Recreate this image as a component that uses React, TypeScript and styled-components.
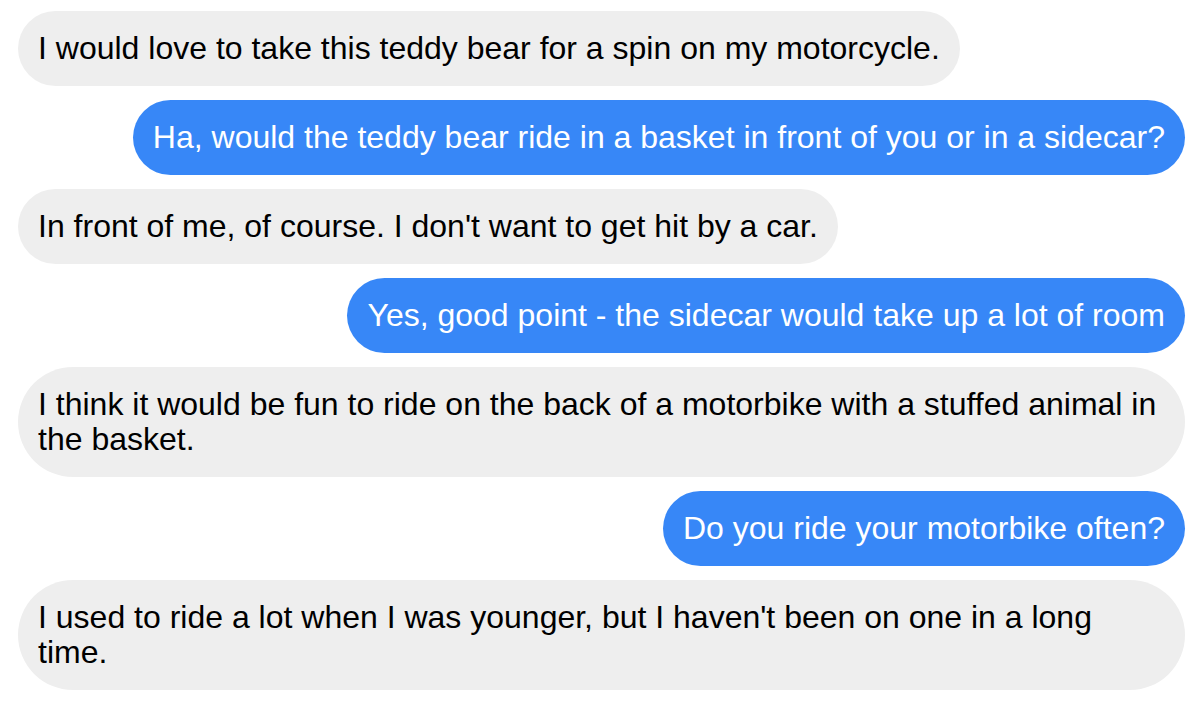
import React from 'react';
import styled, { createGlobalStyle } from 'styled-components';

type Sender = 'bot' | 'user';

interface Message {
  from: Sender;
  text: string;
}

const messages: Message[] = [
  { from: 'bot', text: 'I would love to take this teddy bear for a spin on my motorcycle.' },
  { from: 'user', text: 'Ha, would the teddy bear ride in a basket in front of you or in a sidecar?' },
  { from: 'bot', text: "In front of me, of course. I don't want to get hit by a car." },
  { from: 'user', text: 'Yes, good point - the sidecar would take up a lot of room' },
  { from: 'bot', text: 'I think it would be fun to ride on the back of a motorbike with a stuffed animal in the basket.' },
  { from: 'user', text: 'Do you ride your motorbike often?' },
  { from: 'bot', text: "I used to ride a lot when I was younger, but I haven't been on one in a long time." },
];

const GlobalStyle = createGlobalStyle`
  html, body {
    margin: 0;
    padding: 0;
    background: #ffffff;
  }
  body {
    font-family: "Liberation Sans", Arial, Helvetica, sans-serif;
  }
`;

const Thread = styled.div`
  display: flex;
  flex-direction: column;
  gap: 13.7px;
  padding: 11px 13px 0 18px;
`;

const Row = styled.div<{ $from: Sender }>`
  display: flex;
  justify-content: ${props => (props.$from === 'user' ? 'flex-end' : 'flex-start')};
`;

const Bubble = styled.div<{ $from: Sender }>`
  max-width: 100%;
  box-sizing: border-box;
  padding: 20px 20px;
  border-radius: 999px;
  font-size: 32px;
  line-height: 35.2px;
  background-color: ${props => (props.$from === 'user' ? '#3787f7' : '#eeeeee')};
  color: ${props => (props.$from === 'user' ? '#ffffff' : '#000000')};
`;

const App: React.FC = () => {
  return (
    <>
      <GlobalStyle />
      <Thread>
        {messages.map((m, i) => (
          <Row key={i} $from={m.from}>
            <Bubble $from={m.from}>{m.text}</Bubble>
          </Row>
        ))}
      </Thread>
    </>
  );
};

export default App;
